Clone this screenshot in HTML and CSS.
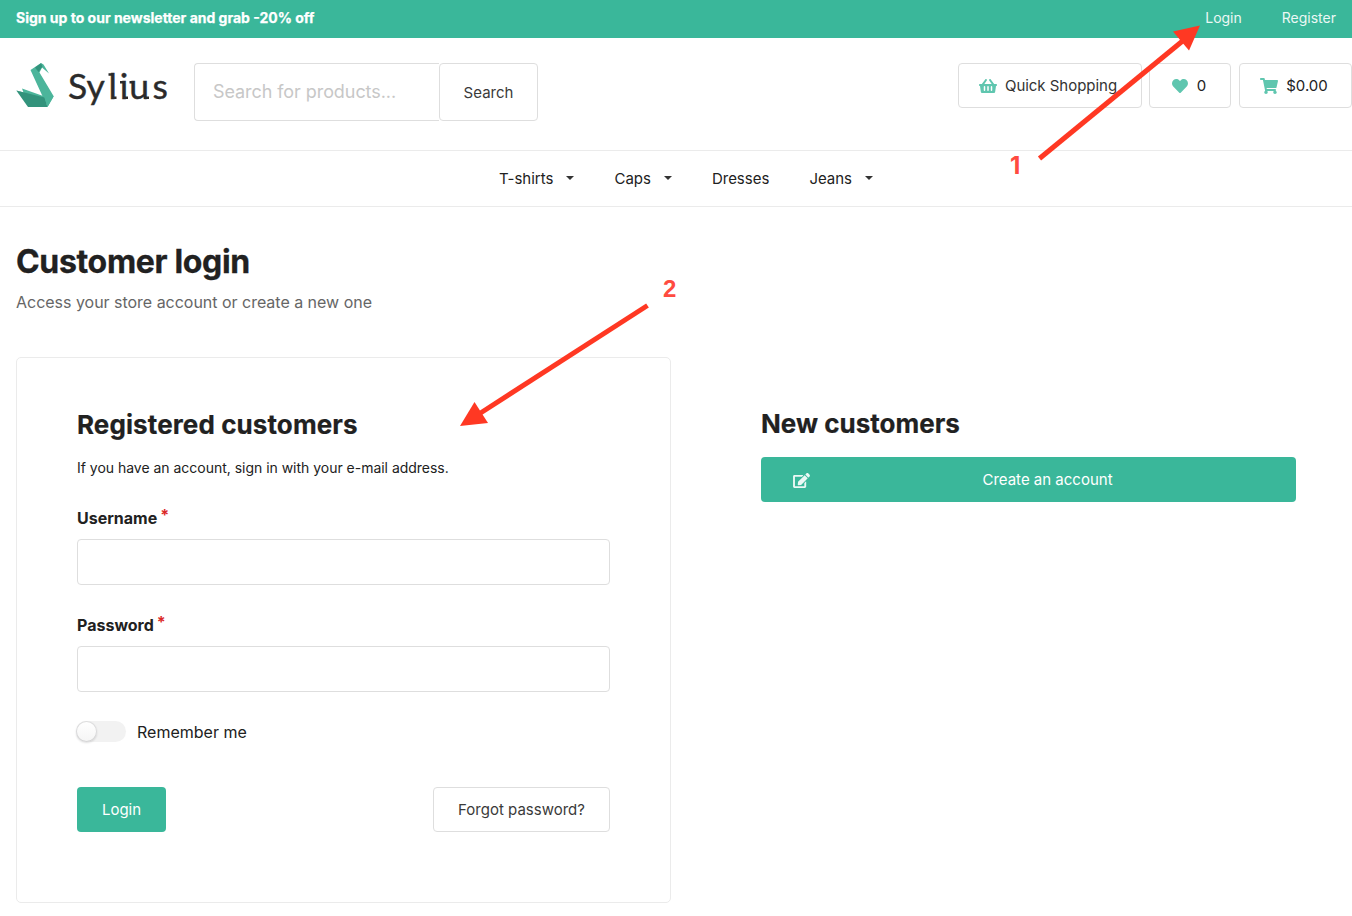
FILE: index.html
```html
<!DOCTYPE html>
<html lang="en">
<head>
<meta charset="utf-8">
<title>Sylius - Customer login</title>
<link rel="stylesheet" href="styles.css">
</head>
<body>
<div class="page">
  <div class="topbar">
    <strong class="promo">Sign up to our newsletter and grab -20% off</strong>
    <nav class="account"><a>Login</a><a>Register</a></nav>
  </div>

  <header class="header">
    <a class="logo">
      <svg class="swan" viewBox="0 0 38 44">
        <path fill="#4cb59b" d="M25 0 14.500 7 25.500 31 31.500 44 37.700 33.300 23.500 9.500 26 4.500 33 10.500 27.500 1.500Z"/>
        <path fill="#33937c" d="M25 0.300 19 4.500 22.500 9 26.500 3.500Z"/>
        <path fill="#4cb59b" d="M0.300 27.500 7.500 29.500 6 25.500 30 34 24 37Z"/>
        <path fill="#33937c" d="M0.300 27.500 28.500 34.500 31.500 44 12 44Z"/>
        <path fill="#4cb59b" d="M28 33 37.700 33.300 31.500 44Z"/>
      </svg>
      <svg class="wordmark" viewBox="0 0 102 46">
        <text x="0 18.500 40.500 51.800 61.300 84.500" y="36">Sylius</text>
        <path class="slab" d="M40.500 11.500h4M44 34.800h4.500M52 19.200h4M55.500 34.800h4.500M61.500 19.200h4M76 34.800h5"/>
      </svg>
    </a>
    <form class="search">
      <input class="search-input" type="text" placeholder="Search for products...">
      <button class="btn search-btn" type="button">Search</button>
    </form>
    <div class="tools">
      <a class="btn tool tool-quick"><svg class="icon" viewBox="0 0 576 512"><path d="M576 216v16c0 13.255-10.745 24-24 24h-8l-26.113 182.788C514.509 462.435 494.257 480 470.370 480H105.630c-23.887 0-44.139-17.565-47.518-41.212L32 256h-8c-13.255 0-24-10.745-24-24v-16c0-13.255 10.745-24 24-24h67.341l106.780-146.821c10.395-14.292 30.407-17.453 44.701-7.058 14.293 10.395 17.453 30.408 7.058 44.701L170.477 192h235.046L326.120 82.821c-10.395-14.292-7.234-34.306 7.059-44.701 14.291-10.395 34.306-7.235 44.701 7.058L484.659 192H552c13.255 0 24 10.745 24 24zM312 392V280c0-13.255-10.745-24-24-24s-24 10.745-24 24v112c0 13.255 10.745 24 24 24s24-10.745 24-24zm112 0V280c0-13.255-10.745-24-24-24s-24 10.745-24 24v112c0 13.255 10.745 24 24 24s24-10.745 24-24zm-224 0V280c0-13.255-10.745-24-24-24s-24 10.745-24 24v112c0 13.255 10.745 24 24 24s24-10.745 24-24z"/></svg><span>Quick Shopping</span></a>
      <a class="btn tool tool-wish"><svg class="icon" viewBox="-32 0 576 512"><path d="M462.300 62.600C407.500 15.900 326 24.300 275.700 76.200L256 96.500l-19.700-20.300C186.100 24.300 104.500 15.900 49.700 62.600c-62.800 53.600-66.100 149.800-9.900 207.900l193.500 199.800c12.500 12.900 32.800 12.900 45.300 0l193.500-199.800c56.300-58.100 53-154.300-9.800-207.900z"/></svg><span>0</span></a>
      <a class="btn tool tool-cart"><svg class="icon" viewBox="0 0 576 512"><path d="M528.120 301.319l47.273-208C578.806 78.301 567.391 64 551.990 64H159.208l-9.166-44.810C147.758 8.021 137.930 0 126.529 0H24C10.745 0 0 10.745 0 24v16c0 13.255 10.745 24 24 24h69.883l70.248 343.435C147.325 417.100 136 435.222 136 456c0 30.928 25.072 56 56 56s56-25.072 56-56c0-15.674-6.447-29.835-16.824-40h209.647C430.447 426.165 424 440.326 424 456c0 30.928 25.072 56 56 56s56-25.072 56-56c0-22.172-12.888-41.332-31.579-50.405l5.517-24.276c3.413-15.018-8.002-29.319-23.403-29.319H218.117l-6.545-32h293.145c11.206 0 20.920-7.754 23.403-18.681z"/></svg><span>$0.00</span></a>
    </div>
  </header>

  <nav class="menu">
    <a>T-shirts<i class="caret"></i></a>
    <a>Caps<i class="caret"></i></a>
    <a>Dresses</a>
    <a>Jeans<i class="caret"></i></a>
  </nav>

  <main class="main">
    <h1 class="title">Customer login</h1>
    <p class="subtitle">Access your store account or create a new one</p>
    <div class="columns">
      <form class="panel">
        <h2 class="heading heading-wide">Registered customers</h2>
        <p class="hint">If you have an account, sign in with your e-mail address.</p>
        <div class="field">
          <label class="label" for="username">Username<span class="star">*</span></label>
          <input class="input" id="username" type="text">
        </div>
        <div class="field">
          <label class="label" for="password">Password<span class="star">*</span></label>
          <input class="input" id="password" type="password">
        </div>
        <div class="remember"><span class="toggle"><span class="knob"></span></span><span>Remember me</span></div>
        <div class="actions">
          <button class="btn primary login" type="button">Login</button>
          <a class="btn forgot">Forgot password?</a>
        </div>
      </form>
      <section class="new">
        <h2 class="heading">New customers</h2>
        <a class="btn primary create"><svg class="edit" viewBox="0 0 576 512"><path d="M402.600 83.200l90.200 90.200c3.800 3.800 3.800 10 0 13.800L274.400 405.600l-92.800 10.300c-12.400 1.400-22.900-9.100-21.500-21.500l10.300-92.800L388.800 83.200c3.800-3.800 10-3.800 13.800 0zm162-22.900l-48.800-48.800c-15.200-15.200-39.900-15.200-55.200 0l-35.400 35.400c-3.800 3.800-3.800 10 0 13.800l90.200 90.200c3.800 3.800 10 3.800 13.800 0l35.400-35.400c15.200-15.300 15.200-40 0-55.200zM384 346.200V448H64V128h229.800c3.200 0 6.200-1.300 8.500-3.500l40-40c7.600-7.600 2.200-20.500-8.500-20.500H48C21.500 64 0 85.500 0 112v352c0 26.500 21.500 48 48 48h352c26.500 0 48-21.500 48-48V306.200c0-10.700-12.900-16-20.500-8.500l-40 40c-2.200 2.300-3.500 5.300-3.500 8.500z"/></svg><span class="create-label">Create an account</span></a>
      </section>
    </div>
  </main>

  <svg class="annotations" viewBox="0 0 1352 916">
    <path class="shaft" d="M1039.500 158.500 1185 39"/>
    <path class="head" d="M1200 25.500 1173 31.500 1189 50.500Z"/>
    <path class="shaft" d="M647.500 305.500 479 414"/>
    <path class="head" d="M460 426 474.500 402 488 423Z"/>
    <text class="num-one" x="1010" y="174">1</text>
    <text x="663" y="297">2</text>
  </svg>
</div>
</body>
</html>
```

FILE: styles.css
```css
* { box-sizing: border-box; }
body { margin: 0; background: #fff; color: #212121; font-family: Inter, "Liberation Sans", sans-serif; font-size: 15px; }
h1, h2, p { margin: 0; }
.page { position: relative; width: 1352px; height: 916px; overflow: hidden; }

.topbar { height: 38px; padding: 0 16px 2px; display: flex; justify-content: space-between; align-items: center; background: #3ab79a; color: #fff; font-size: 14px; line-height: 20px; }
.promo { font-weight: 700; -webkit-text-stroke: .25px #fff; }
.account { display: flex; gap: 40px; color: #ebf8f5; }

.header { height: 112px; display: flex; align-items: flex-start; padding-top: 25px; }
.logo { display: flex; width: 178px; margin-left: 16px; }
.swan { width: 38px; height: 44px; }
.wordmark { width: 102px; height: 46px; margin-left: 14px; overflow: visible; }
.wordmark text { font: 400 35.5px Lato, sans-serif; fill: #2b2b2b; stroke: #2b2b2b; stroke-width: .4px; }
.slab { stroke: #2b2b2b; stroke-width: 2.6; fill: none; }

.btn { display: flex; align-items: center; justify-content: center; height: 45px; border: 1px solid #dedede; border-radius: 4px; background: #fff; color: #3a3a3a; font: 400 15px Inter, sans-serif; white-space: nowrap; }
.primary { background: #3ab79a; border: 0; color: #fff; }

.search { display: flex; width: 344px; height: 58px; }
.search-input { width: 245px; height: 58px; border: 1px solid #dedede; border-right: 0; border-radius: 4px 0 0 4px; padding: 0 18px 1px; font: 400 18px Inter, sans-serif; letter-spacing: -.07px; outline: 0; }
.search-input::placeholder { color: #c7c7c7; }
.search-btn { width: 99px; height: 58px; }

.tools { display: flex; margin-left: auto; }
.tool { color: #333; gap: 8px; padding-right: 3px; }
.tool-quick { width: 184px; margin-right: 7px; letter-spacing: -.03px; padding-right: 4px; }
.tool-wish { width: 82px; margin-right: 8px; color: #222; }
.tool-cart { width: 113px; color: #222; }
.icon { width: 18px; height: 16px; fill: #5fc6af; }

.menu { height: 57px; display: flex; justify-content: center; align-items: center; gap: 40px; padding-left: 20px; border-top: 1px solid #ebebeb; border-bottom: 1px solid #ebebeb; }
.menu a { display: flex; align-items: center; }
.caret { width: 0; height: 0; margin: 0 0 2px 13px; border: 4px solid transparent; border-top: 4px solid #333; border-bottom: 0; }

.main { padding: 35px 16px 0; }
.title { font-size: 32px; line-height: 40px; font-weight: 700; letter-spacing: -.33px; -webkit-text-stroke: .3px #212121; }
.subtitle { margin-top: 10px; font-size: 16px; line-height: 20px; color: #666; letter-spacing: -.02px; }
.columns { display: flex; margin-top: 45px; }
.panel { width: 655px; height: 546px; padding: 50px 60px 0; border: 1px solid #ebebeb; border-radius: 5px; }
.heading { font-size: 26px; line-height: 34px; font-weight: 700; -webkit-text-stroke: .2px #212121; }
.heading-wide { letter-spacing: .1px; }
.hint { margin-top: 16px; font-size: 14px; line-height: 20px; letter-spacing: -.02px; }
.field { margin-top: 30px; }
.label { display: flex; height: 21px; font-size: 16px; line-height: 21px; font-weight: 700; }
.star { margin: -3px 0 0 3px; color: #db2828; }
.input { display: block; width: 533px; height: 46px; margin-top: 10px; border: 1px solid #dedede; border-radius: 4px; padding: 0 16px; }
.remember { display: flex; align-items: center; gap: 11px; height: 21px; margin-top: 29px; font-size: 16px; }
.toggle { width: 50px; height: 21px; margin-left: -1px; border-radius: 11px; background: #f2f2f2; }
.knob { display: block; width: 21px; height: 21px; border-radius: 50%; background: linear-gradient(#fff, #f5f5f5); box-shadow: 0 1px 2px rgba(34,36,38,.15), 0 0 0 1px rgba(34,36,38,.15) inset; }
.actions { display: flex; justify-content: space-between; margin-top: 45px; }
.login { width: 89px; }
.forgot { width: 177px; }
.new { width: 535px; margin-left: 90px; padding-top: 50px; }
.create { position: relative; margin-top: 16px; }
.edit { position: absolute; left: 32px; top: 16px; width: 17px; height: 15px; fill: #ebf8f5; }
.create-label { margin-left: 38px; }

.annotations { position: absolute; inset: 0; width: 1352px; height: 916px; pointer-events: none; }
.shaft { stroke: #ff3823; stroke-width: 5; fill: none; }
.head { fill: #ff3823; }
.annotations text { font: 700 24px "Liberation Sans", sans-serif; fill: #ff4b40; }
.annotations .num-one { font-family: Inter, sans-serif; }
```
